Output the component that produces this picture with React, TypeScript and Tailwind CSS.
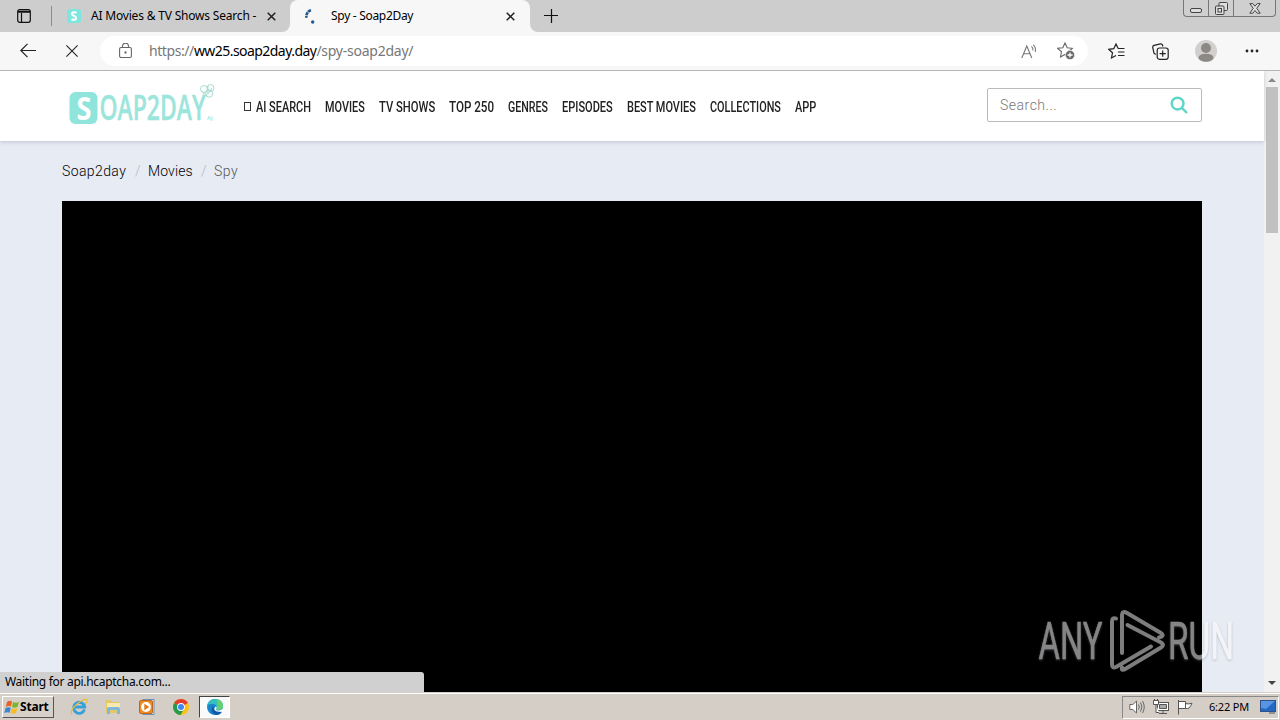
import type { ReactNode } from "react";

const ink = "#1f1f1f";

function Tab({ icon, title, titleClass }: { icon: ReactNode; title: string; titleClass: string }) {
  return (
    <>
      {icon}
      <span className={`whitespace-nowrap text-[12px] leading-4 text-black ${titleClass}`}>{title}</span>
      <svg className="mr-[15px] ml-auto h-[9px] w-[9px] shrink-0" viewBox="0 0 9 9" stroke={ink} strokeWidth="1.5">
        <path d="M.7.7l7.6 7.6M8.3.7L.7 8.3" />
      </svg>
    </>
  );
}

function TabStrip() {
  return (
    <div className="flex h-8 w-full shrink-0 bg-[#cdcdcd]">
      <div className="flex w-[51px] items-center pl-[17px]">
        <svg className="h-[14px] w-[14px]" viewBox="0 0 14 14" fill="none" stroke="#111" strokeWidth="1.2">
          <rect x=".7" y=".7" width="12.6" height="12.6" rx="2" />
          <path d="M1 2.3h12M1 3.2h12M4.5 4v9" strokeWidth="1.2" />
        </svg>
      </div>
      <div className="mt-[6px] h-5 w-px bg-[#8c8c8c]" />
      <div className="flex w-[239px] items-center pl-[15px]">
        <Tab
          title="AI Movies & TV Shows Search -"
          titleClass="ml-[10px] tracking-[-0.19px]"
          icon={
            <svg className="h-[14px] w-[14px]" viewBox="0 0 15 15">
              <rect width="15" height="15" rx="3" fill="#7fe5df" />
              <path d="M10 4.2C8.8 3 5.3 3 5.3 5.3S9.8 7.300 9.800 9.600 6.500 12 4.800 10.800" fill="none" stroke="#fff" strokeWidth="2.2" />
            </svg>
          }
        />
      </div>
      <div className="relative -ml-px flex w-[240px] items-center rounded-t-lg bg-[#f7f7f7] pl-[14px]">
        <svg className="absolute -left-2 bottom-0 h-2 w-2" viewBox="0 0 8 8"><path d="M8 0v8H0a8 8 0 0 0 8-8z" fill="#f7f7f7" /></svg>
        <svg className="absolute -right-2 bottom-0 h-2 w-2" viewBox="0 0 8 8"><path d="M0 0v8h8a8 8 0 0 1-8-8z" fill="#f7f7f7" /></svg>
        <Tab
          title="Spy - Soap2Day"
          titleClass="ml-[11px] tracking-[-0.3px]"
          icon={
            <svg className="h-4 w-4" viewBox="0 0 16 16" fill="none">
              <path d="M7 2.200Q2.300 3.500 2.300 9.800" stroke="#235a8c" strokeWidth="2.600" strokeDasharray="3.400 .5" />
              <circle cx="8.700" cy="14" r="1.700" fill="#235a8c" />
            </svg>
          }
        />
      </div>
      <svg className="mt-[9px] ml-[14px] h-[14px] w-[14px]" viewBox="0 0 14 14" stroke="#111" strokeWidth="1.200">
        <path d="M7.500 0v14M0 6.500h14" />
      </svg>
      <div className="mr-1 ml-auto flex h-[17px] w-[93px] rounded-b-[4px] border border-t-0 border-[#777] bg-[#cfcfcf]">
        <div className="flex w-[25px] items-center justify-center border-r border-[#777]">
          <svg className="mt-1 h-[5px] w-3" viewBox="0 0 12 5"><rect x=".5" y=".5" width="11" height="4" rx="1.500" fill="#ddd" stroke="#444" /></svg>
        </div>
        <div className="flex w-[25px] items-center justify-center border-r border-[#777]">
          <svg className="h-[13px] w-[13px]" viewBox="0 0 13 13" fill="#ddd" stroke="#444">
            <rect x="4" y=".5" width="8.500" height="8" rx="1" />
            <rect x=".5" y="4" width="8.500" height="8.500" rx="1" />
            <rect x="3" y="6.500" width="3.500" height="3.500" />
          </svg>
        </div>
        <div className="flex flex-1 items-center justify-center">
          <svg className="h-[11px] w-3" viewBox="0 0 12 11" fill="#e2e2e2" stroke="#444">
            <path d="M.8.6h3L6 3.200 8.200.6h3L7.700 5.300l3.500 4.900h-3L6 7.500l-2.200 2.700h-3l3.500-4.900z" />
          </svg>
        </div>
      </div>
    </div>
  );
}

const star = "M8 1l2.200 4.700 5.100.6-3.800 3.500 1 5.100L8 12.400l-4.500 2.500 1-5.100L.7 6.300l5.100-.6z";

function Toolbar() {
  return (
    <div className="flex h-[39px] w-full shrink-0 items-center border-b border-[#b5b5b5] bg-[#f7f7f7]">
      <svg className="ml-5 h-4 w-4" viewBox="0 0 16 16" fill="none" stroke="#222" strokeWidth="1.200">
        <path d="M16 7.500H.8M7.500.8L.8 7.500l6.700 6.700" />
      </svg>
      <svg className="ml-[30px] h-3 w-3" viewBox="0 0 12 12" stroke="#222" strokeWidth="1.100"><path d="M.4.4l11.200 11.200M11.600.4L.4 11.600" /></svg>
      <div className="ml-[22px] flex h-[30px] w-[988px] items-center rounded-full bg-white pl-[19px]">
        <svg className="h-4 w-[13px]" viewBox="0 0 13 16" fill="none" stroke="#666" strokeWidth="1.100">
          <rect x=".6" y="4.500" width="11.800" height="10" rx="1.500" />
          <path d="M3.500 4.500V3.200a3 3 0 0 1 6 0v1.300" />
          <circle cx="6.500" cy="9.500" r=".6" fill="#666" />
        </svg>
        <span className="ml-[17px] text-[14px] leading-5 whitespace-nowrap text-[#777]">
          <span className="tracking-[-0.42px]">https://</span>
          <span className="tracking-[-0.55px] text-black">ww25.soap2day.day</span>
          <span className="tracking-[-0.25px]">/spy-soap2day/</span>
        </span>
        <svg className="mr-[19px] ml-auto h-[15px] w-[17px]" viewBox="0 0 17 15" fill="none" stroke="#777" strokeWidth="1.100">
          <path d="M.8 14L5.800 2l5 12M2.600 9.800h6.400M10.500 2.300q2 1.700 1.300 4.200M12.200.8q3.200 2.800 2 7" />
        </svg>
        <svg className="mr-[13px] h-[18px] w-[18px]" viewBox="0 0 18 18" fill="none" stroke="#666" strokeWidth="1.100">
          <path d={star} />
          <circle cx="13" cy="13" r="4.600" fill="#666" stroke="#fff" strokeWidth=".6" />
          <path d="M13 10.400v5.200M10.400 13h5.200" stroke="#fff" strokeWidth="1.300" />
        </svg>
      </div>
      <svg className="ml-5 h-4 w-[17px]" viewBox="0 0 17 16" fill="none" stroke="#222" strokeWidth="1.200">
        <path d="M10.200 5.500L8 1 5.800 5.700.7 6.300l3.800 3.500-1 5.100L8 12.400M10 5.500h6.500M10 9h6.500M10 12.500h6.500" />
      </svg>
      <svg className="ml-[27px] h-[17px] w-[17px]" viewBox="0 0 17 17" fill="none" stroke="#222" strokeWidth="1.200">
        <path d="M3.700 11.500L2 10.200.7 4.500Q.6 2.800 2 2.400L8.500.8Q10 .6 10.500 2l.4 1.500" />
        <rect x="5.200" y="5" width="11" height="11.300" rx="2.200" />
        <path d="M10.700 7.500v6.200M7.600 10.600h6.200" />
      </svg>
      <svg className="ml-[26px] h-[22px] w-[22px]" viewBox="0 0 22 22">
        <circle cx="11" cy="11" r="11" fill="#d2d0ce" />
        <circle cx="11" cy="8" r="5" fill="#8c8884" />
        <ellipse cx="11" cy="17.700" rx="7.500" ry="4" fill="#8c8884" />
      </svg>
      <svg className="ml-[28px] h-3 w-[14px]" viewBox="0 0 14 12" fill="#222">
        <circle cx="2" cy="6" r="1.400" /><circle cx="7" cy="6" r="1.400" /><circle cx="12" cy="6" r="1.400" />
      </svg>
    </div>
  );
}

const nav = [
  { label: "AI SEARCH", box: "w-[55px]", fit: "scale-x-[0.73]" },
  { label: "MOVIES", box: "w-[40px]", fit: "scale-x-[0.725]" },
  { label: "TV SHOWS", box: "w-[56px]", fit: "scale-x-[0.75]" },
  { label: "TOP 250", box: "w-[45px]", fit: "scale-x-[0.775]" },
  { label: "GENRES", box: "w-[40px]", fit: "scale-x-[0.71]" },
  { label: "EPISODES", box: "w-[51px]", fit: "scale-x-[0.735]" },
  { label: "BEST MOVIES", box: "w-[69px]", fit: "scale-x-[0.73]" },
  { label: "COLLECTIONS", box: "w-[71px]", fit: "scale-x-[0.725]" },
  { label: "APP", box: "w-[21px]", fit: "scale-x-[0.73]" },
];

function SiteLogo() {
  return (
    <svg className="h-[54px] w-[154px] overflow-visible" viewBox="0 0 154 54" fontFamily="Open Sans, sans-serif" fontWeight="600">
      <rect x="5.500" y="10" width="28" height="32" rx="6" fill="#8fe5dc" />
      <text x="12.500" y="38" fontSize="33" fontWeight="700" fill="#fff" textLength="15" lengthAdjust="spacingAndGlyphs">S</text>
      <text x="35.500" y="38" fontSize="34" fontWeight="600" fill="#9ce5dc" stroke="#9ce5dc" strokeWidth=".4" textLength="106" lengthAdjust="spacingAndGlyphs">OAP2DAY</text>
      <text x="143" y="38" fontSize="6" fill="#9ce5dc">AJ</text>
      <g fill="none" stroke="#a5ddd2">
        <circle cx="140" cy="7" r="3.500" /><circle cx="146.500" cy="6" r="3.500" /><circle cx="145" cy="11.500" r="3.700" /><path d="M138 9q3 2 2 8M144 4q1 6-2 10M148 6l-4 6" />
      </g>
    </svg>
  );
}

function Page() {
  return (
    <div className="relative flex h-[621px] w-full shrink-0 overflow-hidden">
      <div className="flex w-[1264px] flex-col bg-[#e7ebf4]">
        <header className="z-10 flex h-[70px] shrink-0 bg-white pl-16 shadow-[0_1px_4px_rgba(60,50,90,0.22)]">
          <div className="pt-[11px]"><SiteLogo /></div>
          <div className="ml-[26px] flex h-[70px] items-center pt-px">
            <span className="mr-[5px] h-[9px] w-[7px] border border-[#333]" />
            <nav className="flex gap-[14px] font-[Roboto,sans-serif] text-[15px] leading-5 font-medium text-[#222]">
              {nav.map((n) => (
                <a key={n.label} className={`${n.box} whitespace-nowrap`}>
                  <span className={`inline-block origin-left ${n.fit}`}>{n.label}</span>
                </a>
              ))}
            </nav>
          </div>
          <div className="mt-[17px] mr-[62px] ml-auto flex h-[34px] w-[215px] items-center justify-between rounded-[2px] border border-[#bbb] pr-[13px] pl-3">
            <span className="font-[Roboto,sans-serif] text-[14px] font-light tracking-[0.5px] text-[#777]">Search...</span>
            <svg className="h-[18px] w-[18px]" viewBox="0 0 18 18" fill="none" stroke="#5dd6c6" strokeWidth="2.400">
              <circle cx="7.600" cy="7.600" r="5.900" /><path d="M11.800 11.800l5.200 5.200" />
            </svg>
          </div>
        </header>
        <div className="flex h-[60px] shrink-0 items-center pl-[62px] font-[Roboto,sans-serif] text-[14px] font-light text-black">
          <span className="w-[65px] tracking-[0.4px]">Soap2day</span>
          <span className="ml-2 w-[13px] text-[#b3b7c0]">/</span>
          <span className="w-[45px] tracking-[0.1px]">Movies</span>
          <span className="ml-2 w-[13px] text-[#b3b7c0]">/</span>
          <span className="tracking-[0.5px] text-[#555]">Spy</span>
        </div>
        <div className="ml-[62px] w-[1140px] flex-1 bg-black" />
      </div>
      <div className="flex w-4 flex-col items-center bg-[#f1f1f1]">
        <svg className="mt-[7px] h-1 w-2" viewBox="0 0 8 4"><path d="M0 4l4-4 4 4z" fill="#888" /></svg>
        <div className="mt-[5px] h-[146px] w-3 bg-[#c1c1c1]" />
        <svg className="mt-auto mb-[7px] h-1 w-2" viewBox="0 0 8 4"><path d="M0 0h8L4 4z" fill="#444" /></svg>
      </div>
      <div className="absolute bottom-0 left-0 z-20 flex h-5 w-[424px] items-center rounded-tr-[3px] bg-[#d0d0d0] pl-[5px] text-[12px] text-black">
        <span className="tracking-[-0.3px]">Waiting for api.hcaptcha.com...</span>
      </div>
      <svg className="absolute right-[40px] bottom-[18px] z-20 h-[66px] w-[204px] overflow-visible" viewBox="0 0 204 66" fill="none">
        <defs>
          <linearGradient id="wm" gradientUnits="userSpaceOnUse" x1="0" x2="200" y1="0" y2="0">
            <stop offset=".828" stopColor="#858585" /><stop offset=".832" stopColor="#f3f4f8" />
          </linearGradient>
          <filter id="wmShadow" x="-10%" y="-10%" width="120%" height="130%">
            <feDropShadow dx="0" dy="1" stdDeviation="1.200" floodColor="#777b88" floodOpacity=".45" />
          </filter>
        </defs>
        <g fill="url(#wm)" stroke="url(#wm)" strokeWidth=".5" fontFamily="Roboto, sans-serif" fontSize="51" filter="url(#wmShadow)">
          <text x="2.500" y="51" textLength="64" lengthAdjust="spacingAndGlyphs">ANY</text>
          <text x="132" y="51" textLength="66" lengthAdjust="spacingAndGlyphs">RUN</text>
        </g>
        <g stroke="#7d7d7d" strokeWidth="4" strokeLinecap="round" strokeLinejoin="round">
          <path d="M80 10.500Q76 9 76 14v42q0 5 4 3l35-20.500" />
          <path d="M86 45V8q0-6 5-3l34 20q4 3-2 4.500" />
          <path d="M91.500 17L125 34.500q4 2.500 0 5L90 60.500q-5 3-4-1" />
        </g>
      </svg>
    </div>
  );
}

function Taskbar() {
  return (
    <div className="flex h-7 w-full shrink-0 items-center border-t border-[#d4d0c8] bg-[#d5cec6] pt-px shadow-[inset_0_1px_0_#fff]">
      <div className="ml-[2px] flex h-[22px] w-[52px] items-center border border-t-white border-r-[#555] border-b-[#555] border-l-white bg-[#d6d0c8] pl-px">
        <svg className="h-4 w-4" viewBox="0 0 16 16">
          <path d="M3 3q3-2 5-.5L7 7.500Q4.500 6.500 1.800 8z" fill="#ea6325" />
          <path d="M9 3q3 1.500 6-.3L13.500 8q-3 1.300-5.500 0z" fill="#7db52d" />
          <path d="M1.500 9Q4 7.500 6.800 8.700l-1.200 5Q3.500 12.500.3 14z" fill="#3d86cd" />
          <path d="M7.800 9.300q2.700 1.200 5.500 0L12 14q-3 1.500-5.400 0z" fill="#f7bd20" />
        </svg>
        <span className="text-[12px] font-bold tracking-[-0.2px] text-black">Start</span>
      </div>
      <svg className="ml-4 h-[18px] w-[18px]" viewBox="0 0 18 18" fill="none">
        <path d="M14.500 11.500A5.500 5.500 0 1 1 14.700 9H5" stroke="#379fd9" strokeWidth="2.800" />
        <path d="M2 16Q-.5 13 6 7t10.500-5.500Q18 3 15.500 6" stroke="#e8bd39" strokeWidth="1.200" />
      </svg>
      <svg className="ml-4 h-[18px] w-[18px]" viewBox="0 0 18 18">
        <path d="M2 2h5l1 2h8v11H2z" fill="#e5c866" /><path d="M3 5h13v5H3z" fill="#f8eaae" />
        <path d="M3 16v-5q0-2 2-2h9q2 0 2 2v5h-3v-4H6v4z" fill="#7fb8da" />
      </svg>
      <svg className="ml-4 h-[18px] w-[18px]" viewBox="0 0 18 18">
        <rect x="5" y="1.500" width="11" height="15" fill="#d8e5ee" stroke="#6c91b4" />
        <rect x="1.500" y="2.500" width="13" height="13" rx="1.500" fill="#ef8b20" stroke="#bd6720" />
        <circle cx="8" cy="9" r="4.900" fill="#fff" /><path d="M6.300 5.800l5 3.200-5 3.200z" fill="#e47718" />
      </svg>
      <svg className="ml-[17px] h-4 w-4" viewBox="0 0 16 16">
        <circle cx="8" cy="8" r="8" fill="#fbc116" />
        <path d="M8 8L1.100 4a8 8 0 0 1 13.800 0z" fill="#e33b2e" />
        <path d="M8 8L1.100 4A8 8 0 0 0 7.500 16L11 10z" fill="#269a4a" />
        <circle cx="8" cy="8" r="3.900" fill="#fff" /><circle cx="8" cy="8" r="3" fill="#4285f4" />
      </svg>
      <div className="ml-[10px] flex h-[22px] w-[31px] items-center justify-center border border-t-[#444] border-r-white border-b-white border-l-[#444] bg-[#fafafa]">
        <svg className="h-4 w-4" viewBox="0 0 16 16">
          <circle cx="8" cy="8" r="8" fill="#1687c9" />
          <path d="M.3 6Q2 .2 8 0q7 .2 8 6.500.2 4.500-5 4.500Q9 11 9.500 9.500 10.500 5.500 6 5 2.500 4.800.3 6z" fill="#35bfc0" />
          <path d="M9 .1q6.500.8 7 6.400.2 4.500-5 4.500-2-.1-1.500-1.500Q12 5 9 .1z" fill="#65cf72" />
          <path d="M6 7q-4 6 3 8.900 4 .2 6-3.200Q7 14 6 7z" fill="#1457a5" />
          <path d="M9.500 9.500Q8 11 11 11.500q3 .3 5-2v3q-7 1-8.500-1.500Q7 8 9 7.500q1 1 .5 2z" fill="#fff" />
        </svg>
      </div>
      <div className="mr-px ml-auto flex h-[23px] w-[157px] items-center border border-t-[#888] border-r-white border-b-white border-l-[#888]">
        <svg className="ml-[6px] h-4 w-4" viewBox="0 0 16 16" fill="#fff" stroke="#666">
          <path d="M.8 5.500h3L7.500 2v12L3.800 10.500h-3z" /><path d="M9.500 5.500q1.700 2.500 0 5M11.500 3.500q3 4.500 0 9M13.500 2q3.500 6 0 12" fill="none" />
        </svg>
        <svg className="ml-2 h-4 w-4" viewBox="0 0 16 16" fill="#fff" stroke="#555">
          <rect x="4.500" y="3.500" width="11" height="8" /><path d="M6.500 5.500h7v4h-7z" fill="#aaa" /><path d="M10 12v2M6 14.500h8M.5 1.500h5v4h-5zM1.500 0v2M4.500 0v2M3 5.500v8h3" />
        </svg>
        <svg className="ml-2 h-4 w-4" viewBox="0 0 16 16" fill="#fff" stroke="#555">
          <path d="M1.500 1v14.500M2 2.500h6.500v7H2M8.500 4.500q2 1 6.500-.2-1.200 2.700-3 4.700-1.700 1-3.500.5" />
        </svg>
        <span className="ml-4 text-[11px] tracking-[-0.2px] whitespace-nowrap text-black">6:22 PM</span>
        <svg className="mr-[2px] ml-auto h-4 w-4" viewBox="0 0 16 16">
          <rect x=".5" y="1.500" width="15" height="11" fill="#2468c4" stroke="#30528b" /><path d="M1 2h14L6 10l-5-1z" fill="#5595e2" /><path d="M9 14h6" stroke="#555" />
        </svg>
      </div>
    </div>
  );
}

export default function App() {
  return (
    <div className="flex h-[720px] w-[1280px] flex-col overflow-hidden font-['Noto_Sans',sans-serif]">
      <TabStrip />
      <Toolbar />
      <Page />
      <Taskbar />
    </div>
  );
}
